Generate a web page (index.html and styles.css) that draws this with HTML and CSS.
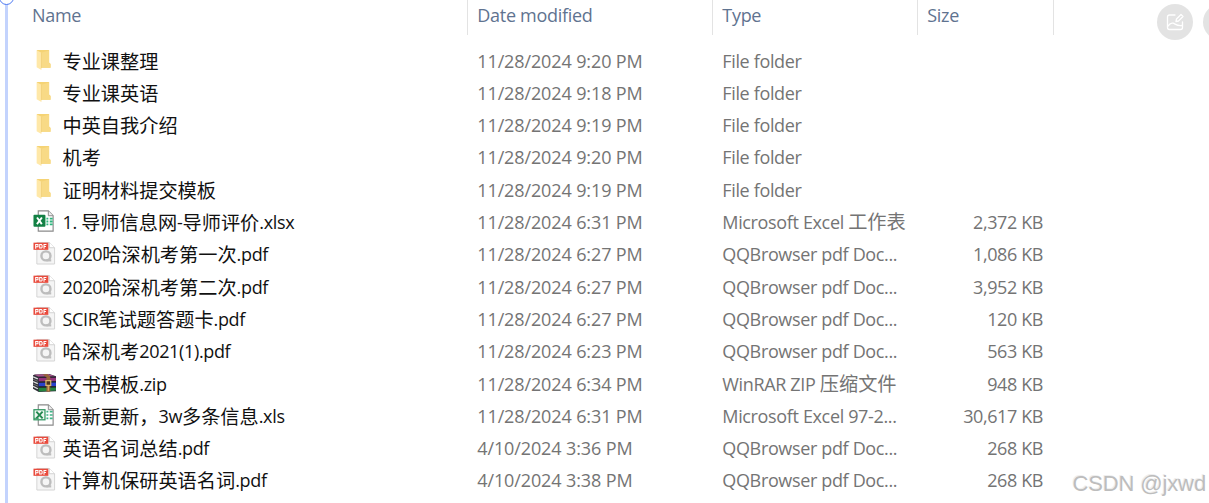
FILE: index.html
```
<!DOCTYPE html>
<html lang="zh-CN">
<head>
    <meta charset="UTF-8">
    <meta name="viewport" content="width=device-width, initial-scale=1.0">
    <title>Files</title>
    <link rel="stylesheet" href="styles.css">
</head>
<body>

    <svg class="sprite" aria-hidden="true">
        <symbol id="folder" viewBox="0 0 24 24">
            <path d="M4 1.500H16.800v13l1.500 1.500v4H8.500z" fill="#f5d374"/>
            <path d="M8.500 4.500L16.800 2v13l1.500 1.500v3.500H8.500z" fill="#f8da86"/>
            <path d="M3.800 1.800l5 2.700v18L3.800 19.500z" fill="#ffe8a8"/>
            <path d="M8.800 4.500v16" stroke="#edc86c" stroke-width=".6"/>
        </symbol>
        <symbol id="xlsx" viewBox="0 0 24 24">
            <path d="M5.500 1.500h10.500l5 5v16H5.500z" fill="#fff" stroke="#8b8b8b" stroke-width="1.200"/>
            <path d="M16 1.500v5h5" fill="#eee" stroke="#8b8b8b"/>
            <path d="M14 9.500h2m1.500 0h3M14 12.500h2m1.500 0h3M14 15.500h2m1.500 0h3" stroke="#2db47d" stroke-width="2"/>
            <rect x=".5" y="5.500" width="12.500" height="12.500" rx="1" fill="#128044"/>
            <path d="M4.200 8.300l5 7M9.300 8.300l-5.200 7" stroke="#fff" stroke-width="2"/>
        </symbol>
        <symbol id="xls" viewBox="0 0 24 24">
            <path d="M5.500 1.500h10.500l5 5v16H5.500z" fill="#fff" stroke="#8b8b8b" stroke-width="1.200"/>
            <path d="M16 1.500v5h5" fill="#eee" stroke="#8b8b8b"/>
            <path d="M14 8.500h2m1.500 0h3M14 12h2m1.500 0h3M14 15.500h2m1.500 0h3" stroke="#3fb387" stroke-width="1.800"/>
            <rect x="1" y="6.500" width="11.500" height="10.500" fill="#f0f8f3" stroke="#2f9660" stroke-width="1.300"/>
            <path d="M3.500 8.500l6.500 7M10 8.500l-6.500 7" stroke="#238850" stroke-width="2"/>
            <path d="M1 15.500h5" stroke="#2f9660"/>
        </symbol>
        <symbol id="pdf" viewBox="0 0 24 24">
            <path d="M4 1h13l5.500 5.500v17H4z" fill="#f5f5f5" stroke="#d3d3d3"/>
            <path d="M17 1v5.500h5.500" fill="#fff" stroke="#d0d0d0"/>
            <circle cx="13.500" cy="15" r="4.700" fill="none" stroke="#bdbdbd" stroke-width="2.500"/>
            <path d="M14 18.500h5v2.300h-5z" fill="#bdbdbd"/>
            <path d="M.5 1.200h15.500v7.500H.5z" fill="#e94b3d"/>
            <path d="M2.800 7.500V3.200h2.400v2.300H3M7 3.200v3.600h1.800l.7-.8V4l-.7-.8zM11.500 7.500V3.200H14M11.500 5.300h2" fill="none" stroke="#fff" stroke-width="1.100"/>
        </symbol>
        <symbol id="zip" viewBox="0 0 24 24">
            <path d="M2 3l15-.5 7 2.500v15.500l-18 1L0 18V4z" fill="#30313a"/>
            <path d="M1 3.500l15-1 7 2.500-17 .5z" fill="#a6538c"/>
            <path d="M6 6.500l18-.5v4l-18 .5z" fill="#94347c"/>
            <path d="M6 11.800l18-.5v3.700l-18 .5z" fill="#2941cc"/>
            <path d="M6 17l18-.5v3.300l-18 1z" fill="#23843f"/>
            <path d="M0 5.500l5 2.200M0 10.500l5 2.200M0 15.500l5 2.500" stroke="#ddd" stroke-width="1.400"/>
            <path d="M0 8l5 2.200M0 13l5 2.200" stroke="#777"/>
            <path d="M6 6h18M6 11h18M6 16.200h18" stroke="#171922" stroke-width=".8"/>
            <path d="M10 3l5-.5 3 3v15.700h-4V6z" fill="#96643a"/>
            <path d="M13.500 9.500h5v5h-5z" fill="#4b321e" stroke="#dab46a" stroke-width="1.300"/>
            <path d="M16 15v5" stroke="#d2a35c" stroke-width="1.300"/>
        </symbol>
    </svg>

    <div class="guide"></div>
    <div class="guide-handle"></div>

    <div class="files">
        <div class="row head">
            <div class="name">Name</div>
            <div class="date">Date modified</div>
            <div class="type">Type</div>
            <div class="size">Size</div>
        </div>
        <div class="row">
            <div class="name"><svg><use href="#folder"/></svg>专业课整理</div>
            <div class="date">11/28/2024 9:20 PM</div>
            <div class="type">File folder</div>
            <div class="size"></div>
        </div>
        <div class="row">
            <div class="name"><svg><use href="#folder"/></svg>专业课英语</div>
            <div class="date">11/28/2024 9:18 PM</div>
            <div class="type">File folder</div>
            <div class="size"></div>
        </div>
        <div class="row">
            <div class="name"><svg><use href="#folder"/></svg>中英自我介绍</div>
            <div class="date">11/28/2024 9:19 PM</div>
            <div class="type">File folder</div>
            <div class="size"></div>
        </div>
        <div class="row">
            <div class="name"><svg><use href="#folder"/></svg>机考</div>
            <div class="date">11/28/2024 9:20 PM</div>
            <div class="type">File folder</div>
            <div class="size"></div>
        </div>
        <div class="row">
            <div class="name"><svg><use href="#folder"/></svg>证明材料提交模板</div>
            <div class="date">11/28/2024 9:19 PM</div>
            <div class="type">File folder</div>
            <div class="size"></div>
        </div>
        <div class="row">
            <div class="name"><svg><use href="#xlsx"/></svg><span>1. </span>导师信息网<span>-</span>导师评价<span>.xlsx</span></div>
            <div class="date">11/28/2024 6:31 PM</div>
            <div class="type">Microsoft Excel <span class="cn">工作表</span></div>
            <div class="size">2,372 KB</div>
        </div>
        <div class="row">
            <div class="name"><svg><use href="#pdf"/></svg><span>2020</span>哈深机考第一次<span>.pdf</span></div>
            <div class="date">11/28/2024 6:27 PM</div>
            <div class="type">QQBrowser pdf Doc...</div>
            <div class="size">1,086 KB</div>
        </div>
        <div class="row">
            <div class="name"><svg><use href="#pdf"/></svg><span>2020</span>哈深机考第二次<span>.pdf</span></div>
            <div class="date">11/28/2024 6:27 PM</div>
            <div class="type">QQBrowser pdf Doc...</div>
            <div class="size">3,952 KB</div>
        </div>
        <div class="row">
            <div class="name"><svg><use href="#pdf"/></svg><span>SCIR</span>笔试题答题卡<span>.pdf</span></div>
            <div class="date">11/28/2024 6:27 PM</div>
            <div class="type">QQBrowser pdf Doc...</div>
            <div class="size">120 KB</div>
        </div>
        <div class="row">
            <div class="name"><svg><use href="#pdf"/></svg>哈深机考<span>2021(1).pdf</span></div>
            <div class="date">11/28/2024 6:23 PM</div>
            <div class="type">QQBrowser pdf Doc...</div>
            <div class="size">563 KB</div>
        </div>
        <div class="row">
            <div class="name"><svg><use href="#zip"/></svg>文书模板<span>.zip</span></div>
            <div class="date">11/28/2024 6:34 PM</div>
            <div class="type">WinRAR ZIP <span class="cn">压缩文件</span></div>
            <div class="size">948 KB</div>
        </div>
        <div class="row">
            <div class="name"><svg><use href="#xls"/></svg>最新更新，<span>3w</span>多条信息<span>.xls</span></div>
            <div class="date">11/28/2024 6:31 PM</div>
            <div class="type">Microsoft Excel 97-2...</div>
            <div class="size">30,617 KB</div>
        </div>
        <div class="row">
            <div class="name"><svg><use href="#pdf"/></svg>英语名词总结<span>.pdf</span></div>
            <div class="date">4/10/2024 3:36 PM</div>
            <div class="type">QQBrowser pdf Doc...</div>
            <div class="size">268 KB</div>
        </div>
        <div class="row">
            <div class="name"><svg><use href="#pdf"/></svg>计算机保研英语名词<span>.pdf</span></div>
            <div class="date">4/10/2024 3:38 PM</div>
            <div class="type">QQBrowser pdf Doc...</div>
            <div class="size">268 KB</div>
        </div>
    </div>

    <div class="tools">
        <button class="tool" aria-label="Edit">
            <svg viewBox="0 0 18 18" fill="none" stroke="#fff" stroke-width="1.300" stroke-linecap="round" stroke-linejoin="round">
                <path d="M9 2H3.500Q1.500 2 1.500 4v10.500q0 2 2 2h11q2 0 2-2V9"/>
                <path d="M2 13q2.500-3.500 5-2.800c2.500.8 4 3 9 2.300"/>
                <path d="M10 8.500l.5-2.500 4.500-4.500 2 2L12.500 8z"/>
            </svg>
        </button>
        <button class="tool" aria-label="More"></button>
    </div>
    <div class="watermark">CSDN @jxwd</div>

</body>
</html>
```

FILE: styles.css
```
body {
    position: relative;
    width: 1209px;
    height: 503px;
    margin: 0;
    overflow: hidden;
    background: #fff;
    color: #747474;
    font-family: "Open Sans", "Noto Sans CJK SC", sans-serif;
    font-size: 18px;
    letter-spacing: -0.12px;
}
.sprite {
    position: absolute;
    width: 0;
    height: 0;
}
.files {
    padding-left: 32px;
}
.row {
    display: grid;
    grid-template-columns: 436px 245px 205px 136px;
    height: 32.3px;
    line-height: 32.3px;
    white-space: nowrap;
}
.row > div {
    padding-left: 9.3px;
}
.row .name {
    display: flex;
    padding-left: 0;
    color: #111;
    font-family: "Noto Sans CJK SC", sans-serif;
    font-size: 19.2px;
    letter-spacing: 0;
    white-space: pre;
}
.name svg {
    width: 23px;
    height: 24px;
    margin: 3px 6.500px 0 1px;
}
.name span {
    font-family: "Open Sans", sans-serif;
    font-size: 18px;
    letter-spacing: -0.35px;
}
.row .type {
    letter-spacing: -0.35px;
}
.cn {
    font-family: "Noto Sans CJK SC", sans-serif;
    font-size: 19.2px;
    letter-spacing: 0;
    line-height: 1;
}
.row .size {
    padding-right: 11px;
    text-align: right;
    letter-spacing: -0.4px;
}
/* column titles */
.head {
    height: 35px;
    line-height: 30px;
    margin-bottom: 9.600px;
}
.row.head > div {
    box-sizing: border-box;
    border-right: 1px solid #e3e3e3;
    color: #5f7390;
    font-family: "Open Sans", sans-serif;
    font-size: 18px;
    letter-spacing: -0.3px;
    text-align: left;
}
.guide {
    position: absolute;
    top: 0;
    left: 5px;
    width: 3px;
    height: 503px;
    background: #c3d3fd;
}
.guide-handle {
    position: absolute;
    top: -10px;
    left: -1px;
    width: 13px;
    height: 13px;
    border: 1.500px solid #4d79f2;
    border-radius: 50%;
    background: #fff;
}
.tools {
    position: absolute;
    top: 4px;
    left: 1157px;
    display: flex;
    gap: 10px;
}
.tool {
    display: flex;
    flex: none;
    align-items: center;
    justify-content: center;
    width: 36px;
    height: 36px;
    padding: 0;
    border: none;
    border-radius: 50%;
    background: #e3e3e3;
}
.tool svg {
    width: 18px;
    height: 18px;
}
.watermark {
    position: absolute;
    right: 3px;
    bottom: 5px;
    color: #bdbdbd;
    font-family: "Liberation Sans", Arial, sans-serif;
    font-size: 22px;
    line-height: 28px;
    text-shadow: -1px -1px 0 #eee;
}
```
